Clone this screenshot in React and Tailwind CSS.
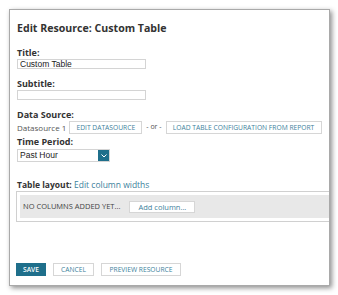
import React from 'react';

const teal = 'bg-[#1f6f8b]';

const Label = ({ children, className = '' }) => (
  <div className={`text-[9px] font-bold leading-[11px] text-[#333] ${className}`}>{children}</div>
);

const GhostButton = ({ children, className = '' }) => (
  <button className={`h-[13px] whitespace-nowrap border border-[#d6d6d6] bg-white px-[5px] text-[6.7px] leading-[11px] text-[#3d7f9c] uppercase ${className}`}>
    {children}
  </button>
);

export default function App() {
  return (
    <div className="h-[295px] w-[338px] bg-white pl-[9px] pt-[9px] font-['Open_Sans',sans-serif]">
      <div className="relative h-[277px] w-[321px] overflow-hidden border border-[#a9a9a9] bg-white shadow-[2px_2px_5px_rgba(0,0,0,0.45)]">
        <div className="pl-[7px]">
          <h1 className="mt-[10px] text-[10.6px] font-bold leading-[17px] text-[#333]">Edit Resource: Custom Table</h1>

          <Label className="mt-[10px]">Title:</Label>
          <input
            readOnly
            value="Custom Table"
            className="mt-[1px] block h-[10px] w-[129px] border border-[#d4d4d4] px-[2px] font-['Liberation_Sans',sans-serif] text-[8.5px] leading-[8px] text-[#222] outline-none"
          />

          <Label className="mt-[9px]">Subtitle:</Label>
          <input readOnly className="mt-[1px] block h-[10px] w-[129px] border border-[#d4d4d4] outline-none" />

          <Label className="mt-[9px]">Data Source:</Label>
          <div className="mt-[1px] flex items-center whitespace-nowrap">
            <span className="text-[8px] leading-[11px] text-[#555]">Datasource 1</span>
            <GhostButton className="ml-[3px] w-[73px] px-0">Edit Datasource</GhostButton>
            <span className="mx-[4px] text-[7px] text-[#555]">- or -</span>
            <GhostButton className="w-[156px] px-0">Load Table Configuration From Report</GhostButton>
          </div>

          <Label className="mt-[2px]">Time Period:</Label>
          <div className="mt-[2px] flex h-[13px] w-[93px] border border-[#d4d4d4]">
            <span className="flex-1 pl-[2px] font-['Liberation_Sans',sans-serif] text-[8.5px] leading-[11px] text-[#222]">Past Hour</span>
            <span className={`flex w-[11px] items-center justify-center ${teal}`}>
              <svg width="6" height="4" viewBox="0 0 6 4" fill="none" stroke="white" strokeWidth="1">
                <path d="M0.5 0.5 3 3 5.5 0.5" />
              </svg>
            </span>
          </div>

          <div className="mt-[17px] text-[8.5px] leading-[11px]">
            <span className="font-bold text-[#333]">Table layout:</span>{' '}
            <span className="text-[#3d7f9c]">Edit column widths</span>
          </div>
        </div>

        <div className="mt-[1px] ml-[6px] w-[330px] border border-[#d0d0d0] p-[3px]">
          <div className="flex h-[23px] items-center bg-[#e8e8e8] pl-[3px]">
            <span className="text-[7.5px] text-[#444]">NO COLUMNS ADDED YET...</span>
            <button className="ml-[9px] h-[12px] border border-[#d6d6d6] bg-white px-[8px] text-[7.5px] leading-[10px] text-[#3d7f9c]">
              Add column...
            </button>
          </div>
        </div>

        <div className="mt-[41px] flex gap-[7px] pl-[6px]">
          <button className={`h-[13px] w-[30px] ${teal} text-[6.7px] font-semibold leading-[13px] text-white`}>SAVE</button>
          <GhostButton className="w-[41px] px-0">Cancel</GhostButton>
          <GhostButton className="w-[80px] px-0">Preview Resource</GhostButton>
        </div>
      </div>
    </div>
  );
}
